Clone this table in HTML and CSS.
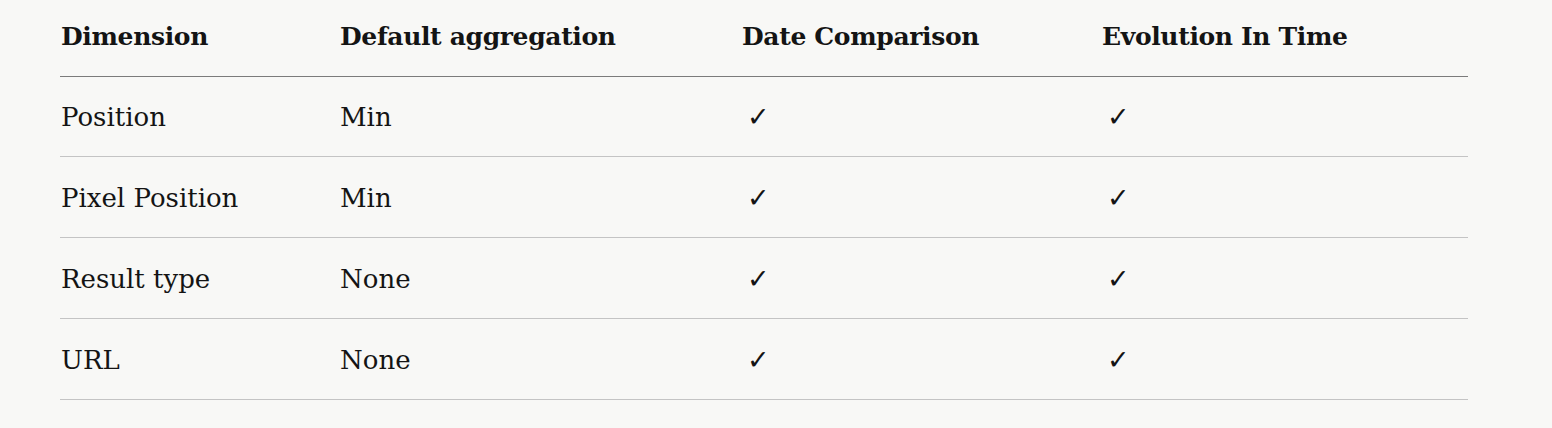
FILE: index.html
```html
<!DOCTYPE html>
<html lang="en">
<head>
<meta charset="utf-8">
<title>Dimensions</title>
<link rel="stylesheet" href="styles.css">
</head>
<body>
<div class="page">
  <table class="dims">
    <colgroup>
      <col class="c1"><col class="c2"><col class="c3"><col class="c4">
    </colgroup>
    <thead>
      <tr>
        <th>Dimension</th>
        <th>Default aggregation</th>
        <th>Date Comparison</th>
        <th>Evolution In Time</th>
      </tr>
    </thead>
    <tbody>
      <tr><td>Position</td><td>Min</td><td><span class="check">✓</span></td><td><span class="check">✓</span></td></tr>
      <tr><td>Pixel Position</td><td>Min</td><td><span class="check">✓</span></td><td><span class="check">✓</span></td></tr>
      <tr><td>Result type</td><td>None</td><td><span class="check">✓</span></td><td><span class="check">✓</span></td></tr>
      <tr><td>URL</td><td>None</td><td><span class="check">✓</span></td><td><span class="check">✓</span></td></tr>
    </tbody>
  </table>
</div>
</body>
</html>
```

FILE: styles.css
```css
html, body {
  margin: 0;
  padding: 0;
  background: #f8f8f6;
}

.page {
  padding: 0 84px 0 60px;
}

.dims {
  width: 1408px;
  border-collapse: collapse;
  table-layout: fixed;
  font-family: "DejaVu Serif", "Liberation Serif", serif;
  color: #141414;
}

.c1 { width: 279px; }
.c2 { width: 402px; }
.c3 { width: 360px; }
.c4 { width: 367px; }

.dims th {
  text-align: left;
  font-weight: 700;
  font-size: 25px;
  letter-spacing: -0.35px;
  height: 76px;
  padding: 0 0 2px 1px;
  box-sizing: border-box;
  vertical-align: middle;
  border-bottom: 1px solid #7b7b7b;
}

.dims td {
  font-size: 26px;
  height: 80.75px;
  padding: 2px 0 0 1px;
  box-sizing: border-box;
  vertical-align: middle;
  border-bottom: 1px solid #c4c4c4;
}

.check {
  display: inline-block;
  font-family: "DejaVu Sans", sans-serif;
  font-size: 27px;
  line-height: 1;
  padding-left: 5px;
}
```
